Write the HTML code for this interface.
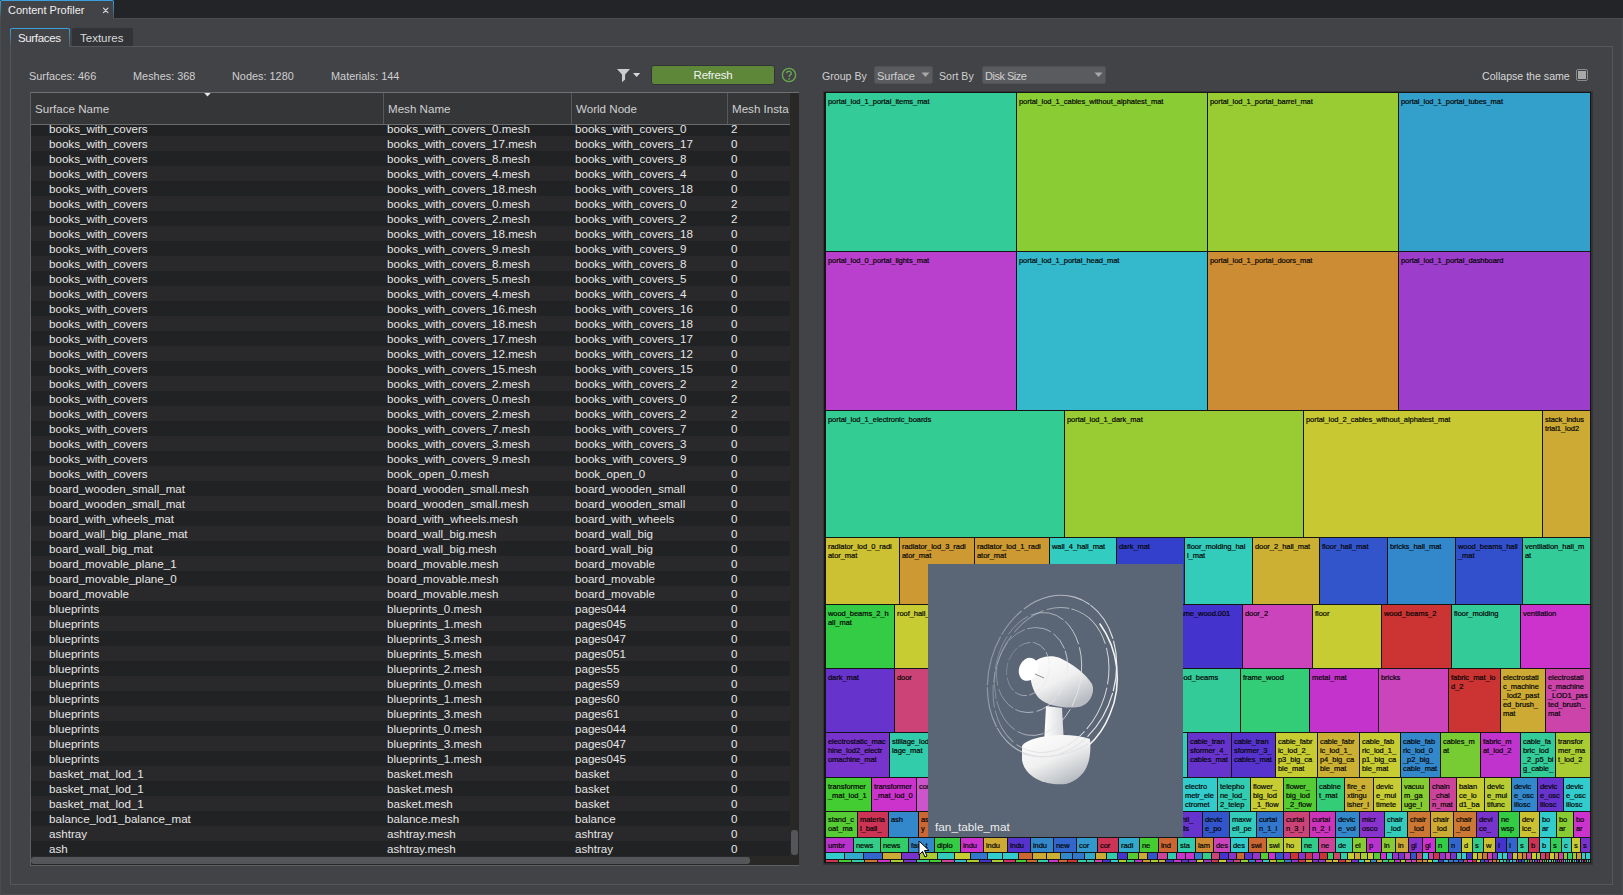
<!DOCTYPE html><html><head><meta charset="utf-8"><style>
*{box-sizing:border-box;margin:0;padding:0}
html,body{width:1623px;height:895px;overflow:hidden;background:#424347;font-family:"Liberation Sans",sans-serif;}
.a{position:absolute}
.tb{position:absolute;color:#e6e6e6;font-size:11.6px;white-space:nowrap;line-height:15px}
.tm{position:absolute;overflow:hidden;font-size:7.5px;line-height:9px;color:#050505;padding:4px 0 0 2px;white-space:nowrap;letter-spacing:-0.05px;-webkit-text-stroke:0.2px #050505}
</style></head><body>

<div class="a" style="left:0;top:0;width:1623px;height:18px;background:#232427"></div>
<div class="a" style="left:114px;top:18px;width:1509px;height:1px;background:#4b4c50"></div>
<div class="a" style="left:0;top:18px;width:1px;height:877px;background:#4b4c50"></div>
<div class="a" style="left:0;top:894px;width:1623px;height:1px;background:#4b4c50"></div>
<div class="a" style="left:1622px;top:18px;width:1px;height:877px;background:#4b4c50"></div>
<div class="a" style="left:0;top:0;width:114px;height:19px;background:#424347;border-top:1px solid #3aa0dc;border-radius:2px 2px 0 0"></div>
<div class="a" style="left:0;top:1px;width:1px;height:18px;background:linear-gradient(#3aa0dc,#4b4c50)"></div>
<div class="a" style="left:113px;top:1px;width:1px;height:18px;background:linear-gradient(#3aa0dc,#4b4c50)"></div>
<div class="a" style="left:8px;top:3px;color:#f0f0f0;font-size:11px;line-height:15px">Content Profiler</div>
<svg class="a" style="left:100px;top:5px" width="12" height="12" viewBox="0 0 12 12"><path d="M3.5 3.2 L7.9 7.6 M7.9 3.2 L3.5 7.6" stroke="#d4d6dc" stroke-width="1.2" stroke-linecap="round"/></svg>
<div class="a" style="left:70px;top:46px;width:1542px;height:1px;background:#56575b"></div>
<div class="a" style="left:10px;top:46px;width:1603px;height:839px;border:1px solid #55565a;border-top:none"></div>
<div class="a" style="left:10px;top:28px;width:60px;height:19px;background:#424347;border-top:1px solid #3aa0dc;border-radius:2px 2px 0 0"></div>
<div class="a" style="left:10px;top:29px;width:1px;height:18px;background:linear-gradient(#3aa0dc,#55565a)"></div>
<div class="a" style="left:69px;top:29px;width:1px;height:18px;background:linear-gradient(#3aa0dc,#55565a)"></div>
<div class="a" style="left:18px;top:31px;color:#f0f0f0;font-size:11.5px;letter-spacing:-0.35px;line-height:15px">Surfaces</div>
<div class="a" style="left:72px;top:28px;width:61px;height:18px;background:#323336;border-radius:2px 2px 0 0"></div>
<div class="a" style="left:80px;top:31px;color:#d8d8d8;font-size:11.5px;line-height:15px">Textures</div>
<div class="a" style="left:29px;top:69px;color:#cfcfcf;font-size:10.9px;line-height:15px">Surfaces: 466</div>
<div class="a" style="left:133px;top:69px;color:#cfcfcf;font-size:10.9px;line-height:15px">Meshes: 368</div>
<div class="a" style="left:232px;top:69px;color:#cfcfcf;font-size:10.9px;line-height:15px">Nodes: 1280</div>
<div class="a" style="left:331px;top:69px;color:#cfcfcf;font-size:10.9px;line-height:15px">Materials: 144</div>
<svg class="a" style="left:615px;top:66px" width="30" height="20" viewBox="0 0 30 20"><path d="M2 3 H15 L10.1 8.4 V13.4 L7 16.2 V8.4 Z" fill="#cdcdcd"/><path d="M18 7 H25.2 L21.6 11 Z" fill="#d8d8d8"/></svg>
<div class="a" style="left:651px;top:65px;width:124px;height:20px;background:#5f873a;border:1px solid #333438;border-radius:3px;color:#f2f2f2;font-size:11.5px;letter-spacing:-0.2px;line-height:18px;text-align:center">Refresh</div>
<svg class="a" style="left:780px;top:66px" width="18" height="18" viewBox="0 0 18 18"><circle cx="9" cy="9" r="6.6" fill="none" stroke="#6aac4c" stroke-width="1.3"/><path d="M6.7 7.3 C6.7 4.5 11.3 4.5 11.3 7.2 C11.3 8.9 9.1 9.2 9.1 11.1" fill="none" stroke="#6aac4c" stroke-width="1.3"/><rect x="8.2" y="12.3" width="1.8" height="1.3" fill="#6aac4c"/></svg>
<div class="a" style="left:30px;top:92px;width:769px;height:774px;background:#2a2828;border:1px solid #5e5f62;border-top-color:#707072;border-right:none"></div>
<div class="a" style="left:31px;top:93px;width:759px;height:31px;background:#353638"></div>
<div class="a" style="left:31px;top:124px;width:759px;height:1px;background:#6a6b6d"></div>
<div class="a" style="left:383px;top:93px;width:1px;height:31px;background:#58595c"></div>
<div class="a" style="left:571px;top:93px;width:1px;height:31px;background:#58595c"></div>
<div class="a" style="left:727px;top:93px;width:1px;height:31px;background:#58595c"></div>
<div class="a" style="left:35px;top:101px;color:#d0d0d0;font-size:11.6px;line-height:15px;white-space:nowrap;overflow:hidden;width:200px">Surface Name</div>
<div class="a" style="left:388px;top:101px;color:#d0d0d0;font-size:11.6px;line-height:15px;white-space:nowrap;overflow:hidden;width:200px">Mesh Name</div>
<div class="a" style="left:576px;top:101px;color:#d0d0d0;font-size:11.6px;line-height:15px;white-space:nowrap;overflow:hidden;width:200px">World Node</div>
<div class="a" style="left:732px;top:101px;color:#d0d0d0;font-size:11.6px;line-height:15px;white-space:nowrap;overflow:hidden;width:58px">Mesh Insta</div>
<svg class="a" style="left:204px;top:93px" width="7" height="5" viewBox="0 0 7 5"><path d="M0.3 0 H6.7 L3.5 3.6 Z" fill="#e8e8e8"/></svg>
<div class="a" style="left:31px;top:125px;width:759px;height:732px;overflow:hidden">
<div class="a" style="left:0;top:-4px;width:759px;height:15px;background:#212224"></div>
<div class="tb" style="left:18px;top:-4px">books_with_covers</div>
<div class="tb" style="left:356px;top:-4px">books_with_covers_0.mesh</div>
<div class="tb" style="left:544px;top:-4px">books_with_covers_0</div>
<div class="tb" style="left:700px;top:-4px">2</div>
<div class="a" style="left:0;top:11px;width:759px;height:15px;background:#29292b"></div>
<div class="tb" style="left:18px;top:11px">books_with_covers</div>
<div class="tb" style="left:356px;top:11px">books_with_covers_17.mesh</div>
<div class="tb" style="left:544px;top:11px">books_with_covers_17</div>
<div class="tb" style="left:700px;top:11px">0</div>
<div class="a" style="left:0;top:26px;width:759px;height:15px;background:#212224"></div>
<div class="tb" style="left:18px;top:26px">books_with_covers</div>
<div class="tb" style="left:356px;top:26px">books_with_covers_8.mesh</div>
<div class="tb" style="left:544px;top:26px">books_with_covers_8</div>
<div class="tb" style="left:700px;top:26px">0</div>
<div class="a" style="left:0;top:41px;width:759px;height:15px;background:#29292b"></div>
<div class="tb" style="left:18px;top:41px">books_with_covers</div>
<div class="tb" style="left:356px;top:41px">books_with_covers_4.mesh</div>
<div class="tb" style="left:544px;top:41px">books_with_covers_4</div>
<div class="tb" style="left:700px;top:41px">0</div>
<div class="a" style="left:0;top:56px;width:759px;height:15px;background:#212224"></div>
<div class="tb" style="left:18px;top:56px">books_with_covers</div>
<div class="tb" style="left:356px;top:56px">books_with_covers_18.mesh</div>
<div class="tb" style="left:544px;top:56px">books_with_covers_18</div>
<div class="tb" style="left:700px;top:56px">0</div>
<div class="a" style="left:0;top:71px;width:759px;height:15px;background:#29292b"></div>
<div class="tb" style="left:18px;top:71px">books_with_covers</div>
<div class="tb" style="left:356px;top:71px">books_with_covers_0.mesh</div>
<div class="tb" style="left:544px;top:71px">books_with_covers_0</div>
<div class="tb" style="left:700px;top:71px">2</div>
<div class="a" style="left:0;top:86px;width:759px;height:15px;background:#212224"></div>
<div class="tb" style="left:18px;top:86px">books_with_covers</div>
<div class="tb" style="left:356px;top:86px">books_with_covers_2.mesh</div>
<div class="tb" style="left:544px;top:86px">books_with_covers_2</div>
<div class="tb" style="left:700px;top:86px">2</div>
<div class="a" style="left:0;top:101px;width:759px;height:15px;background:#29292b"></div>
<div class="tb" style="left:18px;top:101px">books_with_covers</div>
<div class="tb" style="left:356px;top:101px">books_with_covers_18.mesh</div>
<div class="tb" style="left:544px;top:101px">books_with_covers_18</div>
<div class="tb" style="left:700px;top:101px">0</div>
<div class="a" style="left:0;top:116px;width:759px;height:15px;background:#212224"></div>
<div class="tb" style="left:18px;top:116px">books_with_covers</div>
<div class="tb" style="left:356px;top:116px">books_with_covers_9.mesh</div>
<div class="tb" style="left:544px;top:116px">books_with_covers_9</div>
<div class="tb" style="left:700px;top:116px">0</div>
<div class="a" style="left:0;top:131px;width:759px;height:15px;background:#29292b"></div>
<div class="tb" style="left:18px;top:131px">books_with_covers</div>
<div class="tb" style="left:356px;top:131px">books_with_covers_8.mesh</div>
<div class="tb" style="left:544px;top:131px">books_with_covers_8</div>
<div class="tb" style="left:700px;top:131px">0</div>
<div class="a" style="left:0;top:146px;width:759px;height:15px;background:#212224"></div>
<div class="tb" style="left:18px;top:146px">books_with_covers</div>
<div class="tb" style="left:356px;top:146px">books_with_covers_5.mesh</div>
<div class="tb" style="left:544px;top:146px">books_with_covers_5</div>
<div class="tb" style="left:700px;top:146px">0</div>
<div class="a" style="left:0;top:161px;width:759px;height:15px;background:#29292b"></div>
<div class="tb" style="left:18px;top:161px">books_with_covers</div>
<div class="tb" style="left:356px;top:161px">books_with_covers_4.mesh</div>
<div class="tb" style="left:544px;top:161px">books_with_covers_4</div>
<div class="tb" style="left:700px;top:161px">0</div>
<div class="a" style="left:0;top:176px;width:759px;height:15px;background:#212224"></div>
<div class="tb" style="left:18px;top:176px">books_with_covers</div>
<div class="tb" style="left:356px;top:176px">books_with_covers_16.mesh</div>
<div class="tb" style="left:544px;top:176px">books_with_covers_16</div>
<div class="tb" style="left:700px;top:176px">0</div>
<div class="a" style="left:0;top:191px;width:759px;height:15px;background:#29292b"></div>
<div class="tb" style="left:18px;top:191px">books_with_covers</div>
<div class="tb" style="left:356px;top:191px">books_with_covers_18.mesh</div>
<div class="tb" style="left:544px;top:191px">books_with_covers_18</div>
<div class="tb" style="left:700px;top:191px">0</div>
<div class="a" style="left:0;top:206px;width:759px;height:15px;background:#212224"></div>
<div class="tb" style="left:18px;top:206px">books_with_covers</div>
<div class="tb" style="left:356px;top:206px">books_with_covers_17.mesh</div>
<div class="tb" style="left:544px;top:206px">books_with_covers_17</div>
<div class="tb" style="left:700px;top:206px">0</div>
<div class="a" style="left:0;top:221px;width:759px;height:15px;background:#29292b"></div>
<div class="tb" style="left:18px;top:221px">books_with_covers</div>
<div class="tb" style="left:356px;top:221px">books_with_covers_12.mesh</div>
<div class="tb" style="left:544px;top:221px">books_with_covers_12</div>
<div class="tb" style="left:700px;top:221px">0</div>
<div class="a" style="left:0;top:236px;width:759px;height:15px;background:#212224"></div>
<div class="tb" style="left:18px;top:236px">books_with_covers</div>
<div class="tb" style="left:356px;top:236px">books_with_covers_15.mesh</div>
<div class="tb" style="left:544px;top:236px">books_with_covers_15</div>
<div class="tb" style="left:700px;top:236px">0</div>
<div class="a" style="left:0;top:251px;width:759px;height:15px;background:#29292b"></div>
<div class="tb" style="left:18px;top:251px">books_with_covers</div>
<div class="tb" style="left:356px;top:251px">books_with_covers_2.mesh</div>
<div class="tb" style="left:544px;top:251px">books_with_covers_2</div>
<div class="tb" style="left:700px;top:251px">2</div>
<div class="a" style="left:0;top:266px;width:759px;height:15px;background:#212224"></div>
<div class="tb" style="left:18px;top:266px">books_with_covers</div>
<div class="tb" style="left:356px;top:266px">books_with_covers_0.mesh</div>
<div class="tb" style="left:544px;top:266px">books_with_covers_0</div>
<div class="tb" style="left:700px;top:266px">2</div>
<div class="a" style="left:0;top:281px;width:759px;height:15px;background:#29292b"></div>
<div class="tb" style="left:18px;top:281px">books_with_covers</div>
<div class="tb" style="left:356px;top:281px">books_with_covers_2.mesh</div>
<div class="tb" style="left:544px;top:281px">books_with_covers_2</div>
<div class="tb" style="left:700px;top:281px">2</div>
<div class="a" style="left:0;top:296px;width:759px;height:15px;background:#212224"></div>
<div class="tb" style="left:18px;top:296px">books_with_covers</div>
<div class="tb" style="left:356px;top:296px">books_with_covers_7.mesh</div>
<div class="tb" style="left:544px;top:296px">books_with_covers_7</div>
<div class="tb" style="left:700px;top:296px">0</div>
<div class="a" style="left:0;top:311px;width:759px;height:15px;background:#29292b"></div>
<div class="tb" style="left:18px;top:311px">books_with_covers</div>
<div class="tb" style="left:356px;top:311px">books_with_covers_3.mesh</div>
<div class="tb" style="left:544px;top:311px">books_with_covers_3</div>
<div class="tb" style="left:700px;top:311px">0</div>
<div class="a" style="left:0;top:326px;width:759px;height:15px;background:#212224"></div>
<div class="tb" style="left:18px;top:326px">books_with_covers</div>
<div class="tb" style="left:356px;top:326px">books_with_covers_9.mesh</div>
<div class="tb" style="left:544px;top:326px">books_with_covers_9</div>
<div class="tb" style="left:700px;top:326px">0</div>
<div class="a" style="left:0;top:341px;width:759px;height:15px;background:#29292b"></div>
<div class="tb" style="left:18px;top:341px">books_with_covers</div>
<div class="tb" style="left:356px;top:341px">book_open_0.mesh</div>
<div class="tb" style="left:544px;top:341px">book_open_0</div>
<div class="tb" style="left:700px;top:341px">0</div>
<div class="a" style="left:0;top:356px;width:759px;height:15px;background:#212224"></div>
<div class="tb" style="left:18px;top:356px">board_wooden_small_mat</div>
<div class="tb" style="left:356px;top:356px">board_wooden_small.mesh</div>
<div class="tb" style="left:544px;top:356px">board_wooden_small</div>
<div class="tb" style="left:700px;top:356px">0</div>
<div class="a" style="left:0;top:371px;width:759px;height:15px;background:#29292b"></div>
<div class="tb" style="left:18px;top:371px">board_wooden_small_mat</div>
<div class="tb" style="left:356px;top:371px">board_wooden_small.mesh</div>
<div class="tb" style="left:544px;top:371px">board_wooden_small</div>
<div class="tb" style="left:700px;top:371px">0</div>
<div class="a" style="left:0;top:386px;width:759px;height:15px;background:#212224"></div>
<div class="tb" style="left:18px;top:386px">board_with_wheels_mat</div>
<div class="tb" style="left:356px;top:386px">board_with_wheels.mesh</div>
<div class="tb" style="left:544px;top:386px">board_with_wheels</div>
<div class="tb" style="left:700px;top:386px">0</div>
<div class="a" style="left:0;top:401px;width:759px;height:15px;background:#29292b"></div>
<div class="tb" style="left:18px;top:401px">board_wall_big_plane_mat</div>
<div class="tb" style="left:356px;top:401px">board_wall_big.mesh</div>
<div class="tb" style="left:544px;top:401px">board_wall_big</div>
<div class="tb" style="left:700px;top:401px">0</div>
<div class="a" style="left:0;top:416px;width:759px;height:15px;background:#212224"></div>
<div class="tb" style="left:18px;top:416px">board_wall_big_mat</div>
<div class="tb" style="left:356px;top:416px">board_wall_big.mesh</div>
<div class="tb" style="left:544px;top:416px">board_wall_big</div>
<div class="tb" style="left:700px;top:416px">0</div>
<div class="a" style="left:0;top:431px;width:759px;height:15px;background:#29292b"></div>
<div class="tb" style="left:18px;top:431px">board_movable_plane_1</div>
<div class="tb" style="left:356px;top:431px">board_movable.mesh</div>
<div class="tb" style="left:544px;top:431px">board_movable</div>
<div class="tb" style="left:700px;top:431px">0</div>
<div class="a" style="left:0;top:446px;width:759px;height:15px;background:#212224"></div>
<div class="tb" style="left:18px;top:446px">board_movable_plane_0</div>
<div class="tb" style="left:356px;top:446px">board_movable.mesh</div>
<div class="tb" style="left:544px;top:446px">board_movable</div>
<div class="tb" style="left:700px;top:446px">0</div>
<div class="a" style="left:0;top:461px;width:759px;height:15px;background:#29292b"></div>
<div class="tb" style="left:18px;top:461px">board_movable</div>
<div class="tb" style="left:356px;top:461px">board_movable.mesh</div>
<div class="tb" style="left:544px;top:461px">board_movable</div>
<div class="tb" style="left:700px;top:461px">0</div>
<div class="a" style="left:0;top:476px;width:759px;height:15px;background:#212224"></div>
<div class="tb" style="left:18px;top:476px">blueprints</div>
<div class="tb" style="left:356px;top:476px">blueprints_0.mesh</div>
<div class="tb" style="left:544px;top:476px">pages044</div>
<div class="tb" style="left:700px;top:476px">0</div>
<div class="a" style="left:0;top:491px;width:759px;height:15px;background:#29292b"></div>
<div class="tb" style="left:18px;top:491px">blueprints</div>
<div class="tb" style="left:356px;top:491px">blueprints_1.mesh</div>
<div class="tb" style="left:544px;top:491px">pages045</div>
<div class="tb" style="left:700px;top:491px">0</div>
<div class="a" style="left:0;top:506px;width:759px;height:15px;background:#212224"></div>
<div class="tb" style="left:18px;top:506px">blueprints</div>
<div class="tb" style="left:356px;top:506px">blueprints_3.mesh</div>
<div class="tb" style="left:544px;top:506px">pages047</div>
<div class="tb" style="left:700px;top:506px">0</div>
<div class="a" style="left:0;top:521px;width:759px;height:15px;background:#29292b"></div>
<div class="tb" style="left:18px;top:521px">blueprints</div>
<div class="tb" style="left:356px;top:521px">blueprints_5.mesh</div>
<div class="tb" style="left:544px;top:521px">pages051</div>
<div class="tb" style="left:700px;top:521px">0</div>
<div class="a" style="left:0;top:536px;width:759px;height:15px;background:#212224"></div>
<div class="tb" style="left:18px;top:536px">blueprints</div>
<div class="tb" style="left:356px;top:536px">blueprints_2.mesh</div>
<div class="tb" style="left:544px;top:536px">pages55</div>
<div class="tb" style="left:700px;top:536px">0</div>
<div class="a" style="left:0;top:551px;width:759px;height:15px;background:#29292b"></div>
<div class="tb" style="left:18px;top:551px">blueprints</div>
<div class="tb" style="left:356px;top:551px">blueprints_0.mesh</div>
<div class="tb" style="left:544px;top:551px">pages59</div>
<div class="tb" style="left:700px;top:551px">0</div>
<div class="a" style="left:0;top:566px;width:759px;height:15px;background:#212224"></div>
<div class="tb" style="left:18px;top:566px">blueprints</div>
<div class="tb" style="left:356px;top:566px">blueprints_1.mesh</div>
<div class="tb" style="left:544px;top:566px">pages60</div>
<div class="tb" style="left:700px;top:566px">0</div>
<div class="a" style="left:0;top:581px;width:759px;height:15px;background:#29292b"></div>
<div class="tb" style="left:18px;top:581px">blueprints</div>
<div class="tb" style="left:356px;top:581px">blueprints_3.mesh</div>
<div class="tb" style="left:544px;top:581px">pages61</div>
<div class="tb" style="left:700px;top:581px">0</div>
<div class="a" style="left:0;top:596px;width:759px;height:15px;background:#212224"></div>
<div class="tb" style="left:18px;top:596px">blueprints</div>
<div class="tb" style="left:356px;top:596px">blueprints_0.mesh</div>
<div class="tb" style="left:544px;top:596px">pages044</div>
<div class="tb" style="left:700px;top:596px">0</div>
<div class="a" style="left:0;top:611px;width:759px;height:15px;background:#29292b"></div>
<div class="tb" style="left:18px;top:611px">blueprints</div>
<div class="tb" style="left:356px;top:611px">blueprints_3.mesh</div>
<div class="tb" style="left:544px;top:611px">pages047</div>
<div class="tb" style="left:700px;top:611px">0</div>
<div class="a" style="left:0;top:626px;width:759px;height:15px;background:#212224"></div>
<div class="tb" style="left:18px;top:626px">blueprints</div>
<div class="tb" style="left:356px;top:626px">blueprints_1.mesh</div>
<div class="tb" style="left:544px;top:626px">pages045</div>
<div class="tb" style="left:700px;top:626px">0</div>
<div class="a" style="left:0;top:641px;width:759px;height:15px;background:#29292b"></div>
<div class="tb" style="left:18px;top:641px">basket_mat_lod_1</div>
<div class="tb" style="left:356px;top:641px">basket.mesh</div>
<div class="tb" style="left:544px;top:641px">basket</div>
<div class="tb" style="left:700px;top:641px">0</div>
<div class="a" style="left:0;top:656px;width:759px;height:15px;background:#212224"></div>
<div class="tb" style="left:18px;top:656px">basket_mat_lod_1</div>
<div class="tb" style="left:356px;top:656px">basket.mesh</div>
<div class="tb" style="left:544px;top:656px">basket</div>
<div class="tb" style="left:700px;top:656px">0</div>
<div class="a" style="left:0;top:671px;width:759px;height:15px;background:#29292b"></div>
<div class="tb" style="left:18px;top:671px">basket_mat_lod_1</div>
<div class="tb" style="left:356px;top:671px">basket.mesh</div>
<div class="tb" style="left:544px;top:671px">basket</div>
<div class="tb" style="left:700px;top:671px">0</div>
<div class="a" style="left:0;top:686px;width:759px;height:15px;background:#212224"></div>
<div class="tb" style="left:18px;top:686px">balance_lod1_balance_mat</div>
<div class="tb" style="left:356px;top:686px">balance.mesh</div>
<div class="tb" style="left:544px;top:686px">balance</div>
<div class="tb" style="left:700px;top:686px">0</div>
<div class="a" style="left:0;top:701px;width:759px;height:15px;background:#29292b"></div>
<div class="tb" style="left:18px;top:701px">ashtray</div>
<div class="tb" style="left:356px;top:701px">ashtray.mesh</div>
<div class="tb" style="left:544px;top:701px">ashtray</div>
<div class="tb" style="left:700px;top:701px">0</div>
<div class="a" style="left:0;top:716px;width:759px;height:15px;background:#212224"></div>
<div class="tb" style="left:18px;top:716px">ash</div>
<div class="tb" style="left:356px;top:716px">ashtray.mesh</div>
<div class="tb" style="left:544px;top:716px">ashtray</div>
<div class="tb" style="left:700px;top:716px">0</div>
</div>
<div class="a" style="left:790px;top:93px;width:9px;height:772px;background:#2a2827"></div>
<div class="a" style="left:791px;top:830px;width:7px;height:25px;background:#555659;border-radius:3px"></div>
<div class="a" style="left:31px;top:857px;width:760px;height:8px;background:#2a2827"></div>
<div class="a" style="left:31px;top:857px;width:719px;height:7px;background:#555659;border-radius:3px"></div>
<div class="a" style="left:822px;top:69px;color:#cfcfcf;font-size:10.6px;line-height:15px">Group By</div>
<div class="a" style="left:874px;top:66px;width:59px;height:18px;background:#5a5b5f;border:1px solid #505155;border-radius:2px"></div>
<div class="a" style="left:877px;top:69px;color:#d0d0d0;font-size:11px;line-height:15px">Surface</div>
<svg class="a" style="left:921px;top:72px" width="9" height="6" viewBox="0 0 9 6"><path d="M0.5 0.5 H8.5 L4.5 5 Z" fill="#a8a8a8"/></svg>
<div class="a" style="left:939px;top:69px;color:#cfcfcf;font-size:10.6px;line-height:15px">Sort By</div>
<div class="a" style="left:982px;top:66px;width:124px;height:18px;background:#5a5b5f;border:1px solid #505155;border-radius:2px"></div>
<div class="a" style="left:985px;top:69px;color:#d0d0d0;font-size:11px;letter-spacing:-0.5px;line-height:15px">Disk Size</div>
<svg class="a" style="left:1094px;top:72px" width="9" height="6" viewBox="0 0 9 6"><path d="M0.5 0.5 H8.5 L4.5 5 Z" fill="#a8a8a8"/></svg>
<div class="a" style="left:1482px;top:69px;color:#d6d6d6;font-size:10.6px;line-height:15px">Collapse the same</div>
<div class="a" style="left:1576px;top:69px;width:12px;height:12px;border:1px solid #8a8a8a;border-radius:2px;background:#424347"></div>
<div class="a" style="left:1578px;top:71px;width:8px;height:8px;background:#a8a8a8"></div>
<div class="a" style="left:823px;top:91px;width:770px;height:774px;background:#2f3032;border:1px solid #353538"></div>
<div class="a" style="left:824px;top:92px;width:767px;height:771px;background:#151515"></div>
<div class="tm" style="left:826px;top:93px;width:190px;height:158px;background:#33cc99;">portal_lod_1_portal_items_mat</div>
<div class="tm" style="left:1017px;top:93px;width:190px;height:158px;background:#8acc33;">portal_lod_1_cables_without_alphatest_mat</div>
<div class="tm" style="left:1208px;top:93px;width:190px;height:158px;background:#99cc33;">portal_lod_1_portal_barrel_mat</div>
<div class="tm" style="left:1399px;top:93px;width:191px;height:158px;background:#33a0cc;">portal_lod_1_portal_tubes_mat</div>
<div class="tm" style="left:826px;top:252px;width:190px;height:158px;background:#b840cc;">portal_lod_0_portal_lights_mat</div>
<div class="tm" style="left:1017px;top:252px;width:190px;height:158px;background:#33b8cc;">portal_lod_1_portal_head_mat</div>
<div class="tm" style="left:1208px;top:252px;width:190px;height:158px;background:#cc8c33;">portal_lod_1_portal_doors_mat</div>
<div class="tm" style="left:1399px;top:252px;width:191px;height:158px;background:#9c3dcc;">portal_lod_1_portal_dashboard</div>
<div class="tm" style="left:826px;top:411px;width:238px;height:126px;background:#33cc93;">portal_lod_1_electronic_boards</div>
<div class="tm" style="left:1065px;top:411px;width:238px;height:126px;background:#99cc33;">portal_lod_1_dark_mat</div>
<div class="tm" style="left:1304px;top:411px;width:238px;height:126px;background:#c8c833;">portal_lod_2_cables_without_alphatest_mat</div>
<div class="tm" style="left:1543px;top:411px;width:47px;height:126px;background:#ccaa33;">stack_indus<br>trial1_lod2</div>
<div class="tm" style="left:826px;top:538px;width:73px;height:66px;background:#ccc033;">radiator_lod_0_radi<br>ator_mat</div>
<div class="tm" style="left:900px;top:538px;width:74px;height:66px;background:#cc9933;">radiator_lod_3_radi<br>ator_mat</div>
<div class="tm" style="left:975px;top:538px;width:74px;height:66px;background:#cc9933;">radiator_lod_1_radi<br>ator_mat</div>
<div class="tm" style="left:1050px;top:538px;width:66px;height:66px;background:#33ccc0;">wall_4_hall_mat</div>
<div class="tm" style="left:1117px;top:538px;width:67px;height:66px;background:#3340cc;">dark_mat</div>
<div class="tm" style="left:1185px;top:538px;width:67px;height:66px;background:#33ccbb;">floor_molding_hal<br>l_mat</div>
<div class="tm" style="left:1253px;top:538px;width:66px;height:66px;background:#ccb033;">door_2_hall_mat</div>
<div class="tm" style="left:1320px;top:538px;width:67px;height:66px;background:#3355cc;">floor_hall_mat</div>
<div class="tm" style="left:1388px;top:538px;width:67px;height:66px;background:#3388cc;">bricks_hall_mat</div>
<div class="tm" style="left:1456px;top:538px;width:66px;height:66px;background:#3350cc;">wood_beams_hall<br>_mat</div>
<div class="tm" style="left:1523px;top:538px;width:67px;height:66px;background:#33cc99;">ventilation_hall_m<br>at</div>
<div class="tm" style="left:826px;top:605px;width:68px;height:63px;background:#33cc44;">wood_beams_2_h<br>all_mat</div>
<div class="tm" style="left:895px;top:605px;width:69px;height:63px;background:#c8cc33;">roof_hall_mat</div>
<div class="tm" style="left:965px;top:605px;width:68px;height:63px;background:#33aacc;"></div>
<div class="tm" style="left:1034px;top:605px;width:69px;height:63px;background:#cc7733;"></div>
<div class="tm" style="left:1104px;top:605px;width:68px;height:63px;background:#33cc77;"></div>
<div class="tm" style="left:1173px;top:605px;width:69px;height:63px;background:#4433cc;">frame_wood.001</div>
<div class="tm" style="left:1243px;top:605px;width:69px;height:63px;background:#cc44bb;">door_2</div>
<div class="tm" style="left:1313px;top:605px;width:68px;height:63px;background:#c8cc33;">floor</div>
<div class="tm" style="left:1382px;top:605px;width:69px;height:63px;background:#cc3333;">wood_beams_2</div>
<div class="tm" style="left:1452px;top:605px;width:68px;height:63px;background:#33cc99;">floor_molding</div>
<div class="tm" style="left:1521px;top:605px;width:69px;height:63px;background:#cc33cc;">ventilation</div>
<div class="tm" style="left:826px;top:669px;width:68px;height:63px;background:#6633cc;">dark_mat</div>
<div class="tm" style="left:895px;top:669px;width:68px;height:63px;background:#cc4477;">door</div>
<div class="tm" style="left:964px;top:669px;width:68px;height:63px;background:#33aacc;"></div>
<div class="tm" style="left:1033px;top:669px;width:68px;height:63px;background:#cc7733;"></div>
<div class="tm" style="left:1102px;top:669px;width:69px;height:63px;background:#33cc77;"></div>
<div class="tm" style="left:1172px;top:669px;width:68px;height:63px;background:#33cc99;">wood_beams</div>
<div class="tm" style="left:1241px;top:669px;width:68px;height:63px;background:#33cc77;">frame_wood</div>
<div class="tm" style="left:1310px;top:669px;width:68px;height:63px;background:#c433cc;">metal_mat</div>
<div class="tm" style="left:1379px;top:669px;width:69px;height:63px;background:#cc44bb;">bricks</div>
<div class="tm" style="left:1449px;top:669px;width:51px;height:63px;background:#cc3333;">fabric_mat_lo<br>d_2</div>
<div class="tm" style="left:1501px;top:669px;width:44px;height:63px;background:#ccaa33;">electrostati<br>c_machine<br>_lod2_past<br>ed_brush_<br>mat</div>
<div class="tm" style="left:1546px;top:669px;width:44px;height:63px;background:#cc44aa;">electrostati<br>c_machine<br>_LOD1_pas<br>ted_brush_<br>mat</div>
<div class="tm" style="left:826px;top:733px;width:63px;height:44px;background:#7733cc;">electrostatic_mac<br>hine_lod2_electr<br>omachine_mat</div>
<div class="tm" style="left:890px;top:733px;width:60px;height:44px;background:#33ccaa;">stillage_lod_stil<br>lage_mat</div>
<div class="tm" style="left:951px;top:733px;width:59px;height:44px;background:#cc7733;"></div>
<div class="tm" style="left:1011px;top:733px;width:54px;height:44px;background:#33cc77;"></div>
<div class="tm" style="left:1066px;top:733px;width:54px;height:44px;background:#cc3355;"></div>
<div class="tm" style="left:1121px;top:733px;width:66px;height:44px;background:#33ccbb;"></div>
<div class="tm" style="left:1188px;top:733px;width:43px;height:44px;background:#6633cc;">cable_tran<br>sformer_4_<br>cables_mat</div>
<div class="tm" style="left:1232px;top:733px;width:43px;height:44px;background:#5533cc;">cable_tran<br>sformer_3_<br>cables_mat</div>
<div class="tm" style="left:1276px;top:733px;width:41px;height:44px;background:#c8cc33;">cable_fabr<br>ic_lod_2_<br>p3_big_ca<br>ble_mat</div>
<div class="tm" style="left:1318px;top:733px;width:41px;height:44px;background:#ccb033;">cable_fabr<br>ic_lod_1_<br>p4_big_ca<br>ble_mat</div>
<div class="tm" style="left:1360px;top:733px;width:40px;height:44px;background:#c8cc33;">cable_fab<br>ric_lod_1_<br>p1_big_ca<br>ble_mat</div>
<div class="tm" style="left:1401px;top:733px;width:39px;height:44px;background:#3388cc;">cable_fab<br>ric_lod_0<br>_p2_big_<br>cable_mat</div>
<div class="tm" style="left:1441px;top:733px;width:39px;height:44px;background:#77cc33;">cables_m<br>at</div>
<div class="tm" style="left:1481px;top:733px;width:39px;height:44px;background:#c033cc;">fabric_m<br>at_lod_2</div>
<div class="tm" style="left:1521px;top:733px;width:34px;height:44px;background:#33cc99;">cable_fa<br>bric_lod<br>_2_p5_bi<br>g_cable_</div>
<div class="tm" style="left:1556px;top:733px;width:34px;height:44px;background:#aacc33;">transfor<br>mer_ma<br>t_lod_2</div>
<div class="tm" style="left:826px;top:778px;width:45px;height:33px;background:#44cc33;">transformer<br>_mat_lod_1</div>
<div class="tm" style="left:872px;top:778px;width:44px;height:33px;background:#cc33cc;">transformer<br>_mat_lod_0</div>
<div class="tm" style="left:917px;top:778px;width:43px;height:33px;background:#cc55cc;">control_pa</div>
<div class="tm" style="left:961px;top:778px;width:44px;height:33px;background:#33aacc;"></div>
<div class="tm" style="left:1006px;top:778px;width:44px;height:33px;background:#cc7733;"></div>
<div class="tm" style="left:1051px;top:778px;width:49px;height:33px;background:#33cc77;"></div>
<div class="tm" style="left:1101px;top:778px;width:49px;height:33px;background:#cc3355;"></div>
<div class="tm" style="left:1151px;top:778px;width:66px;height:33px;background:#33cccc;padding-left:34px;">electro<br>metr_ele<br>ctromet</div>
<div class="tm" style="left:1218px;top:778px;width:32px;height:33px;background:#33ccb0;">telepho<br>ne_lod_<br>2_telep</div>
<div class="tm" style="left:1251px;top:778px;width:32px;height:33px;background:#c8cc33;">flower_<br>big_lod<br>_1_flow</div>
<div class="tm" style="left:1284px;top:778px;width:32px;height:33px;background:#55cc33;">flower_<br>big_lod<br>_2_flow</div>
<div class="tm" style="left:1317px;top:778px;width:27px;height:33px;background:#33cc77;">cabine<br>t_mat</div>
<div class="tm" style="left:1345px;top:778px;width:28px;height:33px;background:#ccb033;">fire_e<br>xtingu<br>isher_l</div>
<div class="tm" style="left:1374px;top:778px;width:27px;height:33px;background:#c8cc33;">devic<br>e_mul<br>timete</div>
<div class="tm" style="left:1402px;top:778px;width:27px;height:33px;background:#88cc33;">vacuu<br>m_ga<br>uge_l</div>
<div class="tm" style="left:1430px;top:778px;width:26px;height:33px;background:#cc4499;">chain<br>_chai<br>n_mat</div>
<div class="tm" style="left:1457px;top:778px;width:27px;height:33px;background:#c8cc33;">balan<br>ce_lo<br>d1_ba</div>
<div class="tm" style="left:1485px;top:778px;width:26px;height:33px;background:#b8cc33;">devic<br>e_mul<br>tifunc</div>
<div class="tm" style="left:1512px;top:778px;width:25px;height:33px;background:#3388cc;">devic<br>e_osc<br>illosc</div>
<div class="tm" style="left:1538px;top:778px;width:25px;height:33px;background:#6633cc;">devic<br>e_osc<br>illosc</div>
<div class="tm" style="left:1564px;top:778px;width:26px;height:33px;background:#33cccc;">devic<br>e_osc<br>illosc</div>
<div class="tm" style="left:826px;top:812px;width:31px;height:25px;background:#55cc33;padding-top:2.5px;">stand_c<br>oat_ma</div>
<div class="tm" style="left:858px;top:812px;width:30px;height:25px;background:#cc3355;padding-top:2.5px;">materia<br>l_ball_</div>
<div class="tm" style="left:889px;top:812px;width:29px;height:25px;background:#3388cc;padding-top:2.5px;">ash</div>
<div class="tm" style="left:919px;top:812px;width:31px;height:25px;background:#cc6633;padding-top:2.5px;">ashtra<br>y</div>
<div class="tm" style="left:951px;top:812px;width:34px;height:25px;background:#33aacc;padding-top:2.5px;"></div>
<div class="tm" style="left:986px;top:812px;width:34px;height:25px;background:#cc7733;padding-top:2.5px;"></div>
<div class="tm" style="left:1021px;top:812px;width:34px;height:25px;background:#33cc77;padding-top:2.5px;"></div>
<div class="tm" style="left:1056px;top:812px;width:34px;height:25px;background:#cc3355;padding-top:2.5px;"></div>
<div class="tm" style="left:1091px;top:812px;width:34px;height:25px;background:#33ccbb;padding-top:2.5px;"></div>
<div class="tm" style="left:1126px;top:812px;width:34px;height:25px;background:#4433cc;padding-top:2.5px;"></div>
<div class="tm" style="left:1161px;top:812px;width:41px;height:25px;background:#6633cc;padding-left:17px;padding-top:2.5px;">chil_<br>alls</div>
<div class="tm" style="left:1203px;top:812px;width:26px;height:25px;background:#3355cc;padding-top:2.5px;">devic<br>e_po</div>
<div class="tm" style="left:1230px;top:812px;width:26px;height:25px;background:#33ccbb;padding-top:2.5px;">maxw<br>ell_pe</div>
<div class="tm" style="left:1257px;top:812px;width:26px;height:25px;background:#3377cc;padding-top:2.5px;">curtai<br>n_1_l</div>
<div class="tm" style="left:1284px;top:812px;width:25px;height:25px;background:#cc4477;padding-top:2.5px;">curtai<br>n_3_l</div>
<div class="tm" style="left:1310px;top:812px;width:25px;height:25px;background:#cc33bb;padding-top:2.5px;">curtai<br>n_2_l</div>
<div class="tm" style="left:1336px;top:812px;width:23px;height:25px;background:#3388cc;padding-top:2.5px;">devic<br>e_vol</div>
<div class="tm" style="left:1360px;top:812px;width:24px;height:25px;background:#8833cc;padding-top:2.5px;">micr<br>osco</div>
<div class="tm" style="left:1385px;top:812px;width:22px;height:25px;background:#33ccbb;padding-top:2.5px;">chair<br>_lod</div>
<div class="tm" style="left:1408px;top:812px;width:22px;height:25px;background:#cc7733;padding-top:2.5px;">chair<br>_lod</div>
<div class="tm" style="left:1431px;top:812px;width:22px;height:25px;background:#ccaa33;padding-top:2.5px;">chair<br>_lod</div>
<div class="tm" style="left:1454px;top:812px;width:22px;height:25px;background:#cc7733;padding-top:2.5px;">chair<br>_lod</div>
<div class="tm" style="left:1477px;top:812px;width:21px;height:25px;background:#7733cc;padding-top:2.5px;">devi<br>ce_</div>
<div class="tm" style="left:1499px;top:812px;width:20px;height:25px;background:#33cc44;padding-top:2.5px;">ne<br>wsp</div>
<div class="tm" style="left:1520px;top:812px;width:19px;height:25px;background:#ccc033;padding-top:2.5px;">dev<br>ice_</div>
<div class="tm" style="left:1540px;top:812px;width:16px;height:25px;background:#33cccc;padding-top:2.5px;">bo<br>ar</div>
<div class="tm" style="left:1557px;top:812px;width:16px;height:25px;background:#88cc33;padding-top:2.5px;">bo<br>ar</div>
<div class="tm" style="left:1574px;top:812px;width:16px;height:25px;background:#cc33cc;padding-top:2.5px;">bo<br>ar</div>
<div class="tm" style="left:826px;top:838px;width:27px;height:14px;background:#b833cc;padding-top:3px;">umbr</div>
<div class="tm" style="left:854px;top:838px;width:26px;height:14px;background:#33cc88;padding-top:3px;">news</div>
<div class="tm" style="left:881px;top:838px;width:27px;height:14px;background:#33cc66;padding-top:3px;">news</div>
<div class="tm" style="left:909px;top:838px;width:25px;height:14px;background:#3388cc;padding-top:3px;">fan_t</div>
<div class="tm" style="left:935px;top:838px;width:25px;height:14px;background:#33cc44;padding-top:3px;">diplo</div>
<div class="tm" style="left:961px;top:838px;width:22px;height:14px;background:#cc33cc;padding-top:3px;">indu</div>
<div class="tm" style="left:984px;top:838px;width:23px;height:14px;background:#ccaa33;padding-top:3px;">indu</div>
<div class="tm" style="left:1008px;top:838px;width:22px;height:14px;background:#5533cc;padding-top:3px;">indu</div>
<div class="tm" style="left:1031px;top:838px;width:22px;height:14px;background:#3388cc;padding-top:3px;">indu</div>
<div class="tm" style="left:1054px;top:838px;width:22px;height:14px;background:#3366cc;padding-top:3px;">new</div>
<div class="tm" style="left:1077px;top:838px;width:20px;height:14px;background:#3399cc;padding-top:3px;">cor</div>
<div class="tm" style="left:1098px;top:838px;width:20px;height:14px;background:#cc3355;padding-top:3px;">cor</div>
<div class="tm" style="left:1119px;top:838px;width:20px;height:14px;background:#33aacc;padding-top:3px;">radi</div>
<div class="tm" style="left:1140px;top:838px;width:18px;height:14px;background:#44cc33;padding-top:3px;">ne</div>
<div class="tm" style="left:1159px;top:838px;width:18px;height:14px;background:#cc6633;padding-top:3px;">ind</div>
<div class="tm" style="left:1178px;top:838px;width:17px;height:14px;background:#33ccaa;padding-top:3px;">sta</div>
<div class="tm" style="left:1196px;top:838px;width:17px;height:14px;background:#cc8833;padding-top:3px;">lam</div>
<div class="tm" style="left:1214px;top:838px;width:16px;height:14px;background:#cc44bb;padding-top:3px;">des</div>
<div class="tm" style="left:1231px;top:838px;width:17px;height:14px;background:#33cccc;padding-top:3px;">des</div>
<div class="tm" style="left:1249px;top:838px;width:17px;height:14px;background:#cc6633;padding-top:3px;">swi</div>
<div class="tm" style="left:1267px;top:838px;width:16px;height:14px;background:#aacc33;padding-top:3px;">swi</div>
<div class="tm" style="left:1284px;top:838px;width:17px;height:14px;background:#c8cc33;padding-top:3px;">ho</div>
<div class="tm" style="left:1302px;top:838px;width:16px;height:14px;background:#33cc88;padding-top:3px;">ne</div>
<div class="tm" style="left:1319px;top:838px;width:16px;height:14px;background:#cc4499;padding-top:3px;">ne</div>
<div class="tm" style="left:1336px;top:838px;width:16px;height:14px;background:#33ccaa;padding-top:3px;">de</div>
<div class="tm" style="left:1353px;top:838px;width:13px;height:14px;background:#88cc33;padding-top:3px;">el</div>
<div class="tm" style="left:1367px;top:838px;width:14px;height:14px;background:#b833cc;padding-top:3px;">p</div>
<div class="tm" style="left:1382px;top:838px;width:13px;height:14px;background:#88cc33;padding-top:3px;">in</div>
<div class="tm" style="left:1396px;top:838px;width:12px;height:14px;background:#ccaa33;padding-top:3px;">in</div>
<div class="tm" style="left:1409px;top:838px;width:13px;height:14px;background:#8833cc;padding-top:3px;">gl</div>
<div class="tm" style="left:1423px;top:838px;width:12px;height:14px;background:#cc33cc;padding-top:3px;">gl</div>
<div class="tm" style="left:1436px;top:838px;width:12px;height:14px;background:#33cc44;padding-top:3px;">n</div>
<div class="tm" style="left:1449px;top:838px;width:12px;height:14px;background:#3366cc;padding-top:3px;">n</div>
<div class="tm" style="left:1462px;top:838px;width:10px;height:14px;background:#c8cc33;padding-top:3px;">d</div>
<div class="tm" style="left:1473px;top:838px;width:10px;height:14px;background:#33cc88;padding-top:3px;">s</div>
<div class="tm" style="left:1484px;top:838px;width:11px;height:14px;background:#ccc033;padding-top:3px;">w</div>
<div class="tm" style="left:1496px;top:838px;width:10px;height:14px;background:#4433cc;padding-top:3px;">I</div>
<div class="tm" style="left:1507px;top:838px;width:10px;height:14px;background:#3366cc;padding-top:3px;">I</div>
<div class="tm" style="left:1518px;top:838px;width:10px;height:14px;background:#33cc99;padding-top:3px;">s</div>
<div class="tm" style="left:1529px;top:838px;width:10px;height:14px;background:#cc3355;padding-top:3px;">b</div>
<div class="tm" style="left:1540px;top:838px;width:10px;height:14px;background:#33cccc;padding-top:3px;">b</div>
<div class="tm" style="left:1551px;top:838px;width:10px;height:14px;background:#33cc55;padding-top:3px;">s</div>
<div class="tm" style="left:1562px;top:838px;width:9px;height:14px;background:#33ccbb;padding-top:3px;">c</div>
<div class="tm" style="left:1572px;top:838px;width:8px;height:14px;background:#c8cc33;padding-top:3px;">s</div>
<div class="tm" style="left:1581px;top:838px;width:9px;height:14px;background:#7733cc;padding-top:3px;">s</div>
<div class="tm" style="left:826px;top:853px;width:18px;height:6px;background:#33cccc;"></div>
<div class="tm" style="left:845px;top:853px;width:18px;height:6px;background:#33aacc;"></div>
<div class="tm" style="left:864px;top:853px;width:18px;height:6px;background:#3366cc;"></div>
<div class="tm" style="left:883px;top:853px;width:18px;height:6px;background:#ccaa33;"></div>
<div class="tm" style="left:902px;top:853px;width:17px;height:6px;background:#7733cc;"></div>
<div class="tm" style="left:920px;top:853px;width:17px;height:6px;background:#aacc33;"></div>
<div class="tm" style="left:938px;top:853px;width:16px;height:6px;background:#33ccbb;"></div>
<div class="tm" style="left:955px;top:853px;width:15px;height:6px;background:#c8cc33;"></div>
<div class="tm" style="left:971px;top:853px;width:16px;height:6px;background:#3377cc;"></div>
<div class="tm" style="left:988px;top:853px;width:14px;height:6px;background:#33cccc;"></div>
<div class="tm" style="left:1003px;top:853px;width:15px;height:6px;background:#33cccc;"></div>
<div class="tm" style="left:1019px;top:853px;width:13px;height:6px;background:#cc6633;"></div>
<div class="tm" style="left:1033px;top:853px;width:13px;height:6px;background:#ccaa33;"></div>
<div class="tm" style="left:1047px;top:853px;width:13px;height:6px;background:#ccb033;"></div>
<div class="tm" style="left:1061px;top:853px;width:11px;height:6px;background:#3388cc;"></div>
<div class="tm" style="left:1073px;top:853px;width:11px;height:6px;background:#3377cc;"></div>
<div class="tm" style="left:1085px;top:853px;width:10px;height:6px;background:#33aacc;"></div>
<div class="tm" style="left:1096px;top:853px;width:10px;height:6px;background:#ccaa33;"></div>
<div class="tm" style="left:1107px;top:853px;width:10px;height:6px;background:#33ccaa;"></div>
<div class="tm" style="left:1118px;top:853px;width:9px;height:6px;background:#4433cc;"></div>
<div class="tm" style="left:1128px;top:853px;width:10px;height:6px;background:#55cc33;"></div>
<div class="tm" style="left:1139px;top:853px;width:8px;height:6px;background:#ccaa33;"></div>
<div class="tm" style="left:1148px;top:853px;width:9px;height:6px;background:#3355cc;"></div>
<div class="tm" style="left:1158px;top:853px;width:9px;height:6px;background:#cc4499;"></div>
<div class="tm" style="left:1168px;top:853px;width:8px;height:6px;background:#33ccaa;"></div>
<div class="tm" style="left:1177px;top:853px;width:8px;height:6px;background:#cc33cc;"></div>
<div class="tm" style="left:1186px;top:853px;width:8px;height:6px;background:#cc33cc;"></div>
<div class="tm" style="left:1195px;top:853px;width:7px;height:6px;background:#3377cc;"></div>
<div class="tm" style="left:1203px;top:853px;width:8px;height:6px;background:#33cc88;"></div>
<div class="tm" style="left:1212px;top:853px;width:7px;height:6px;background:#cc4477;"></div>
<div class="tm" style="left:1220px;top:853px;width:8px;height:6px;background:#4433cc;"></div>
<div class="tm" style="left:1229px;top:853px;width:7px;height:6px;background:#8833cc;"></div>
<div class="tm" style="left:1237px;top:853px;width:7px;height:6px;background:#cc6633;"></div>
<div class="tm" style="left:1245px;top:853px;width:7px;height:6px;background:#5533cc;"></div>
<div class="tm" style="left:1253px;top:853px;width:7px;height:6px;background:#9933cc;"></div>
<div class="tm" style="left:1261px;top:853px;width:7px;height:6px;background:#55cc33;"></div>
<div class="tm" style="left:1269px;top:853px;width:6px;height:6px;background:#cc33cc;"></div>
<div class="tm" style="left:1276px;top:853px;width:7px;height:6px;background:#3355cc;"></div>
<div class="tm" style="left:1284px;top:853px;width:6px;height:6px;background:#8833cc;"></div>
<div class="tm" style="left:1291px;top:853px;width:7px;height:6px;background:#cc3333;"></div>
<div class="tm" style="left:1299px;top:853px;width:6px;height:6px;background:#8833cc;"></div>
<div class="tm" style="left:1306px;top:853px;width:6px;height:6px;background:#cc3355;"></div>
<div class="tm" style="left:1313px;top:853px;width:6px;height:6px;background:#b833cc;"></div>
<div class="tm" style="left:1320px;top:853px;width:7px;height:6px;background:#cc3333;"></div>
<div class="tm" style="left:1328px;top:853px;width:5px;height:6px;background:#33cc66;"></div>
<div class="tm" style="left:1334px;top:853px;width:6px;height:6px;background:#cc4466;"></div>
<div class="tm" style="left:1341px;top:853px;width:6px;height:6px;background:#33ccaa;"></div>
<div class="tm" style="left:1348px;top:853px;width:6px;height:6px;background:#c8cc33;"></div>
<div class="tm" style="left:1355px;top:853px;width:5px;height:6px;background:#ccaa33;"></div>
<div class="tm" style="left:1361px;top:853px;width:6px;height:6px;background:#aacc33;"></div>
<div class="tm" style="left:1368px;top:853px;width:5px;height:6px;background:#c8cc33;"></div>
<div class="tm" style="left:1374px;top:853px;width:6px;height:6px;background:#55cc33;"></div>
<div class="tm" style="left:1381px;top:853px;width:5px;height:6px;background:#cc33cc;"></div>
<div class="tm" style="left:1387px;top:853px;width:5px;height:6px;background:#33ccaa;"></div>
<div class="tm" style="left:1393px;top:853px;width:5px;height:6px;background:#9933cc;"></div>
<div class="tm" style="left:1399px;top:853px;width:5px;height:6px;background:#7733cc;"></div>
<div class="tm" style="left:1405px;top:853px;width:5px;height:6px;background:#cc44bb;"></div>
<div class="tm" style="left:1411px;top:853px;width:5px;height:6px;background:#3355cc;"></div>
<div class="tm" style="left:1417px;top:853px;width:5px;height:6px;background:#cc4477;"></div>
<div class="tm" style="left:1423px;top:853px;width:5px;height:6px;background:#33cccc;"></div>
<div class="tm" style="left:1429px;top:853px;width:4px;height:6px;background:#cc44aa;"></div>
<div class="tm" style="left:1434px;top:853px;width:5px;height:6px;background:#cc3355;"></div>
<div class="tm" style="left:1440px;top:853px;width:5px;height:6px;background:#9933cc;"></div>
<div class="tm" style="left:1446px;top:853px;width:4px;height:6px;background:#cc44bb;"></div>
<div class="tm" style="left:1451px;top:853px;width:5px;height:6px;background:#7733cc;"></div>
<div class="tm" style="left:1457px;top:853px;width:4px;height:6px;background:#33ccbb;"></div>
<div class="tm" style="left:1462px;top:853px;width:4px;height:6px;background:#33cccc;"></div>
<div class="tm" style="left:1467px;top:853px;width:5px;height:6px;background:#4433cc;"></div>
<div class="tm" style="left:1473px;top:853px;width:4px;height:6px;background:#c8cc33;"></div>
<div class="tm" style="left:1478px;top:853px;width:4px;height:6px;background:#ccaa33;"></div>
<div class="tm" style="left:1483px;top:853px;width:4px;height:6px;background:#cc7733;"></div>
<div class="tm" style="left:1488px;top:853px;width:4px;height:6px;background:#cc44aa;"></div>
<div class="tm" style="left:1493px;top:853px;width:4px;height:6px;background:#8833cc;"></div>
<div class="tm" style="left:1498px;top:853px;width:4px;height:6px;background:#33cccc;"></div>
<div class="tm" style="left:1503px;top:853px;width:4px;height:6px;background:#33cccc;"></div>
<div class="tm" style="left:1508px;top:853px;width:4px;height:6px;background:#7733cc;"></div>
<div class="tm" style="left:1513px;top:853px;width:4px;height:6px;background:#ccc033;"></div>
<div class="tm" style="left:1518px;top:853px;width:4px;height:6px;background:#cc9933;"></div>
<div class="a" style="left:1523px;top:853px;width:3px;height:6px;background:#cc7733"></div>
<div class="tm" style="left:1527px;top:853px;width:4px;height:6px;background:#cc44aa;"></div>
<div class="tm" style="left:1532px;top:853px;width:4px;height:6px;background:#c8cc33;"></div>
<div class="a" style="left:1537px;top:853px;width:3px;height:6px;background:#aacc33"></div>
<div class="tm" style="left:1541px;top:853px;width:4px;height:6px;background:#cc4477;"></div>
<div class="a" style="left:1546px;top:853px;width:3px;height:6px;background:#cc3344"></div>
<div class="tm" style="left:1550px;top:853px;width:4px;height:6px;background:#c8cc33;"></div>
<div class="a" style="left:1555px;top:853px;width:3px;height:6px;background:#cc9933"></div>
<div class="tm" style="left:1559px;top:853px;width:4px;height:6px;background:#cc44aa;"></div>
<div class="a" style="left:1564px;top:853px;width:3px;height:6px;background:#88cc33"></div>
<div class="tm" style="left:1568px;top:853px;width:4px;height:6px;background:#33cc77;"></div>
<div class="a" style="left:1573px;top:853px;width:3px;height:6px;background:#99cc33"></div>
<div class="tm" style="left:1577px;top:853px;width:4px;height:6px;background:#cc9933;"></div>
<div class="a" style="left:1582px;top:853px;width:3px;height:6px;background:#33cccc"></div>
<div class="tm" style="left:1586px;top:853px;width:4px;height:6px;background:#33cccc;"></div>
<div class="a" style="left:826px;top:860px;width:12px;height:2px;background:#cc3355"></div>
<div class="a" style="left:839px;top:860px;width:12px;height:2px;background:#44cc33"></div>
<div class="a" style="left:852px;top:860px;width:12px;height:2px;background:#33ccaa"></div>
<div class="a" style="left:865px;top:860px;width:12px;height:2px;background:#cc7733"></div>
<div class="a" style="left:878px;top:860px;width:12px;height:2px;background:#cc33cc"></div>
<div class="a" style="left:891px;top:860px;width:12px;height:2px;background:#aacc33"></div>
<div class="a" style="left:904px;top:860px;width:12px;height:2px;background:#7733cc"></div>
<div class="a" style="left:917px;top:860px;width:12px;height:2px;background:#33cc88"></div>
<div class="a" style="left:930px;top:860px;width:11px;height:2px;background:#44cc33"></div>
<div class="a" style="left:942px;top:860px;width:12px;height:2px;background:#cc4499"></div>
<div class="a" style="left:955px;top:860px;width:11px;height:2px;background:#33bbcc"></div>
<div class="a" style="left:967px;top:860px;width:12px;height:2px;background:#aacc33"></div>
<div class="a" style="left:980px;top:860px;width:11px;height:2px;background:#4433cc"></div>
<div class="a" style="left:992px;top:860px;width:11px;height:2px;background:#aacc33"></div>
<div class="a" style="left:1004px;top:860px;width:11px;height:2px;background:#cc3366"></div>
<div class="a" style="left:1016px;top:860px;width:10px;height:2px;background:#44cc33"></div>
<div class="a" style="left:1027px;top:860px;width:10px;height:2px;background:#cc6633"></div>
<div class="a" style="left:1038px;top:860px;width:10px;height:2px;background:#33ccaa"></div>
<div class="a" style="left:1049px;top:860px;width:9px;height:2px;background:#cc33cc"></div>
<div class="a" style="left:1059px;top:860px;width:8px;height:2px;background:#cc6633"></div>
<div class="a" style="left:1068px;top:860px;width:9px;height:2px;background:#cc3333"></div>
<div class="a" style="left:1078px;top:860px;width:8px;height:2px;background:#33ccaa"></div>
<div class="a" style="left:1087px;top:860px;width:7px;height:2px;background:#33ccaa"></div>
<div class="a" style="left:1095px;top:860px;width:7px;height:2px;background:#cc44aa"></div>
<div class="a" style="left:1103px;top:860px;width:7px;height:2px;background:#4433cc"></div>
<div class="a" style="left:1111px;top:860px;width:7px;height:2px;background:#33cccc"></div>
<div class="a" style="left:1119px;top:860px;width:7px;height:2px;background:#aacc33"></div>
<div class="a" style="left:1127px;top:860px;width:7px;height:2px;background:#33cc77"></div>
<div class="a" style="left:1135px;top:860px;width:7px;height:2px;background:#b833cc"></div>
<div class="a" style="left:1143px;top:860px;width:7px;height:2px;background:#cc9933"></div>
<div class="a" style="left:1151px;top:860px;width:7px;height:2px;background:#aacc33"></div>
<div class="a" style="left:1159px;top:860px;width:6px;height:2px;background:#ccaa33"></div>
<div class="a" style="left:1166px;top:860px;width:7px;height:2px;background:#4433cc"></div>
<div class="a" style="left:1174px;top:860px;width:7px;height:2px;background:#cc33cc"></div>
<div class="a" style="left:1182px;top:860px;width:6px;height:2px;background:#5533cc"></div>
<div class="a" style="left:1189px;top:860px;width:7px;height:2px;background:#8833cc"></div>
<div class="a" style="left:1197px;top:860px;width:6px;height:2px;background:#c8cc33"></div>
<div class="a" style="left:1204px;top:860px;width:7px;height:2px;background:#9933cc"></div>
<div class="a" style="left:1212px;top:860px;width:6px;height:2px;background:#cc3355"></div>
<div class="a" style="left:1219px;top:860px;width:7px;height:2px;background:#c8cc33"></div>
<div class="a" style="left:1227px;top:860px;width:6px;height:2px;background:#7733cc"></div>
<div class="a" style="left:1234px;top:860px;width:6px;height:2px;background:#cc4477"></div>
<div class="a" style="left:1241px;top:860px;width:7px;height:2px;background:#99cc33"></div>
<div class="a" style="left:1249px;top:860px;width:6px;height:2px;background:#3377cc"></div>
<div class="a" style="left:1256px;top:860px;width:6px;height:2px;background:#b833cc"></div>
<div class="a" style="left:1263px;top:860px;width:6px;height:2px;background:#33ccbb"></div>
<div class="a" style="left:1270px;top:860px;width:6px;height:2px;background:#ccb033"></div>
<div class="a" style="left:1277px;top:860px;width:7px;height:2px;background:#55cc33"></div>
<div class="a" style="left:1285px;top:860px;width:6px;height:2px;background:#3377cc"></div>
<div class="a" style="left:1292px;top:860px;width:6px;height:2px;background:#9933cc"></div>
<div class="a" style="left:1299px;top:860px;width:6px;height:2px;background:#cc3355"></div>
<div class="a" style="left:1306px;top:860px;width:6px;height:2px;background:#ccaa33"></div>
<div class="a" style="left:1313px;top:860px;width:5px;height:2px;background:#7733cc"></div>
<div class="a" style="left:1319px;top:860px;width:6px;height:2px;background:#9933cc"></div>
<div class="a" style="left:1326px;top:860px;width:6px;height:2px;background:#ccaa33"></div>
<div class="a" style="left:1333px;top:860px;width:5px;height:2px;background:#ccc033"></div>
<div class="a" style="left:1339px;top:860px;width:6px;height:2px;background:#cc3344"></div>
<div class="a" style="left:1346px;top:860px;width:5px;height:2px;background:#cc9933"></div>
<div class="a" style="left:1352px;top:860px;width:6px;height:2px;background:#7733cc"></div>
<div class="a" style="left:1359px;top:860px;width:5px;height:2px;background:#33cccc"></div>
<div class="a" style="left:1365px;top:860px;width:5px;height:2px;background:#c8cc33"></div>
<div class="a" style="left:1371px;top:860px;width:5px;height:2px;background:#3388cc"></div>
<div class="a" style="left:1377px;top:860px;width:5px;height:2px;background:#ccaa33"></div>
<div class="a" style="left:1383px;top:860px;width:5px;height:2px;background:#33cc88"></div>
<div class="a" style="left:1389px;top:860px;width:5px;height:2px;background:#55cc33"></div>
<div class="a" style="left:1395px;top:860px;width:5px;height:2px;background:#b833cc"></div>
<div class="a" style="left:1401px;top:860px;width:4px;height:2px;background:#aacc33"></div>
<div class="a" style="left:1406px;top:860px;width:5px;height:2px;background:#cc44bb"></div>
<div class="a" style="left:1412px;top:860px;width:4px;height:2px;background:#cc44bb"></div>
<div class="a" style="left:1417px;top:860px;width:5px;height:2px;background:#cc7733"></div>
<div class="a" style="left:1423px;top:860px;width:4px;height:2px;background:#cc9933"></div>
<div class="a" style="left:1428px;top:860px;width:4px;height:2px;background:#c8cc33"></div>
<div class="a" style="left:1433px;top:860px;width:5px;height:2px;background:#33cccc"></div>
<div class="a" style="left:1439px;top:860px;width:4px;height:2px;background:#4433cc"></div>
<div class="a" style="left:1444px;top:860px;width:4px;height:2px;background:#33aacc"></div>
<div class="a" style="left:1449px;top:860px;width:4px;height:2px;background:#3377cc"></div>
<div class="a" style="left:1454px;top:860px;width:4px;height:2px;background:#3377cc"></div>
<div class="a" style="left:1459px;top:860px;width:4px;height:2px;background:#3355cc"></div>
<div class="a" style="left:1464px;top:860px;width:3px;height:2px;background:#cc4477"></div>
<div class="a" style="left:1468px;top:860px;width:4px;height:2px;background:#cc33cc"></div>
<div class="a" style="left:1473px;top:860px;width:3px;height:2px;background:#cc3333"></div>
<div class="a" style="left:1477px;top:860px;width:3px;height:2px;background:#c8cc33"></div>
<div class="a" style="left:1481px;top:860px;width:3px;height:2px;background:#3355cc"></div>
<div class="a" style="left:1485px;top:860px;width:3px;height:2px;background:#7733cc"></div>
<div class="a" style="left:1489px;top:860px;width:3px;height:2px;background:#cc44aa"></div>
<div class="a" style="left:1493px;top:860px;width:3px;height:2px;background:#cc7733"></div>
<div class="a" style="left:1497px;top:860px;width:2px;height:2px;background:#cc9933"></div>
<div class="a" style="left:1500px;top:860px;width:3px;height:2px;background:#33cccc"></div>
<div class="a" style="left:1504px;top:860px;width:2px;height:2px;background:#33cc77"></div>
<div class="a" style="left:1507px;top:860px;width:2px;height:2px;background:#3366cc"></div>
<div class="a" style="left:1510px;top:860px;width:2px;height:2px;background:#33cccc"></div>
<div class="a" style="left:1513px;top:860px;width:3px;height:2px;background:#33aacc"></div>
<div class="a" style="left:1517px;top:860px;width:1px;height:2px;background:#cc4499"></div>
<div class="a" style="left:1519px;top:860px;width:2px;height:2px;background:#4433cc"></div>
<div class="a" style="left:1522px;top:860px;width:2px;height:2px;background:#3355cc"></div>
<div class="a" style="left:1525px;top:860px;width:2px;height:2px;background:#33cc66"></div>
<div class="a" style="left:1528px;top:860px;width:1px;height:2px;background:#55cc33"></div>
<div class="a" style="left:1530px;top:860px;width:2px;height:2px;background:#cc4477"></div>
<div class="a" style="left:1533px;top:860px;width:1px;height:2px;background:#33ccbb"></div>
<div class="a" style="left:1535px;top:860px;width:2px;height:2px;background:#8833cc"></div>
<div class="a" style="left:1538px;top:860px;width:1px;height:2px;background:#cc44aa"></div>
<div class="a" style="left:1540px;top:860px;width:2px;height:2px;background:#cc44aa"></div>
<div class="a" style="left:1543px;top:860px;width:1px;height:2px;background:#55cc33"></div>
<div class="a" style="left:1545px;top:860px;width:1px;height:2px;background:#33cc77"></div>
<div class="a" style="left:1547px;top:860px;width:1px;height:2px;background:#ccaa33"></div>
<div class="a" style="left:1549px;top:860px;width:2px;height:2px;background:#33cccc"></div>
<div class="a" style="left:1552px;top:860px;width:1px;height:2px;background:#ccaa33"></div>
<div class="a" style="left:1554px;top:860px;width:1px;height:2px;background:#33ccaa"></div>
<div class="a" style="left:1556px;top:860px;width:1px;height:2px;background:#8833cc"></div>
<div class="a" style="left:1558px;top:860px;width:1px;height:2px;background:#8833cc"></div>
<div class="a" style="left:1560px;top:860px;width:1px;height:2px;background:#cc4466"></div>
<div class="a" style="left:1562px;top:860px;width:1px;height:2px;background:#cc33cc"></div>
<div class="a" style="left:1564px;top:860px;width:1px;height:2px;background:#33cccc"></div>
<div class="a" style="left:1566px;top:860px;width:1px;height:2px;background:#33cccc"></div>
<div class="a" style="left:1568px;top:860px;width:1px;height:2px;background:#33cccc"></div>
<div class="a" style="left:1570px;top:860px;width:1px;height:2px;background:#c8cc33"></div>
<div class="a" style="left:1573px;top:860px;width:1px;height:2px;background:#33cccc"></div>
<div class="a" style="left:1575px;top:860px;width:1px;height:2px;background:#33cccc"></div>
<div class="a" style="left:1577px;top:860px;width:1px;height:2px;background:#7733cc"></div>
<div class="a" style="left:1580px;top:860px;width:1px;height:2px;background:#33ccaa"></div>
<div class="a" style="left:1582px;top:860px;width:1px;height:2px;background:#cc33cc"></div>
<div class="a" style="left:1585px;top:860px;width:1px;height:2px;background:#cc3333"></div>
<div class="a" style="left:1587px;top:860px;width:1px;height:2px;background:#33ccaa"></div>
<div class="a" style="left:1589px;top:860px;width:1px;height:2px;background:#33ccaa"></div>
<div class="a" style="left:928px;top:564px;width:255px;height:273px;background:#5a6575"></div>
<svg class="a" style="left:928px;top:564px" width="255" height="273" viewBox="0 0 255 273">
<defs>
<linearGradient id="gb" x1="0" y1="0" x2="0.6" y2="1"><stop offset="0" stop-color="#ffffff"/><stop offset="0.55" stop-color="#f0f0f0"/><stop offset="1" stop-color="#b9bdc3"/></linearGradient>
<linearGradient id="rg" x1="0" y1="0" x2="1" y2="0"><stop offset="0" stop-color="#c8ccd2" stop-opacity="0.45"/><stop offset="0.5" stop-color="#d4d7db" stop-opacity="0.8"/><stop offset="1" stop-color="#e8e9eb" stop-opacity="1"/></linearGradient>
<linearGradient id="gs" x1="0" y1="0" x2="1" y2="0"><stop offset="0" stop-color="#ffffff"/><stop offset="1" stop-color="#d8dadc"/></linearGradient>
</defs>
<g fill="url(#gb)">
<path d="M116 180 L118 142 L134 144 L136 180 Z" fill="url(#gs)"/>
<path d="M94 182 C100 172 140 167 162 175 C164 198 158 214 138 220 C118 222 97 214 94 196 Z"/>
<path d="M104 100 C110 93 122 90 132 94 C145 100 158 110 164 120 C168 130 160 142 150 143 C138 145 120 142 112 135 C103 127 100 108 104 100 Z"/>
<ellipse cx="100.4" cy="105.3" rx="9.3" ry="11.8" transform="rotate(20 100.4 105.3)" fill="#ffffff"/><path d="M107 110 L116 114" stroke="#8a9099" stroke-width="1"/>
</g>
<g fill="none" stroke="url(#rg)" stroke-linecap="round">
<ellipse cx="124" cy="112" rx="63" ry="82" transform="rotate(16 124 112)" stroke-width="1.2" stroke-dasharray="50 3 30 4 70 2 40 3"/>
<ellipse cx="123" cy="116" rx="56" ry="74" transform="rotate(18 123 116)" stroke-width="1" stroke-dasharray="36 4 22 3 50 5" opacity="0.9"/>
<ellipse cx="110" cy="110" rx="43" ry="62" transform="rotate(10 110 110)" stroke-width="0.9" stroke-dasharray="26 4 34 3" opacity="0.85"/>
<ellipse cx="104" cy="106" rx="35" ry="43" transform="rotate(15 104 106)" stroke-width="0.9" stroke-dasharray="18 3 24 4" opacity="0.8"/>
<ellipse cx="100" cy="105" rx="21" ry="27" transform="rotate(15 100 105)" stroke-width="0.8" stroke-dasharray="12 3 14 3" opacity="0.75"/>
<path d="M172 60 C190 85 195 120 182 150 C176 165 168 175 160 182" stroke="#f4f4f4" stroke-width="1.6"/><path d="M95 190 C115 196 140 192 160 180" stroke="#e0e2e5" stroke-width="1.1"/>
</g>
</svg>
<div class="a" style="left:935px;top:820px;color:#ececec;font-size:11.8px;line-height:15px">fan_table_mat</div>
<svg class="a" style="left:918px;top:840px" width="14" height="20" viewBox="0 0 14 20"><path d="M1 1 L1 15 L4.5 11.5 L7 17 L9 16 L6.5 10.5 L11 10.5 Z" fill="#ffffff" stroke="#000000" stroke-width="1"/></svg>
</body></html>
